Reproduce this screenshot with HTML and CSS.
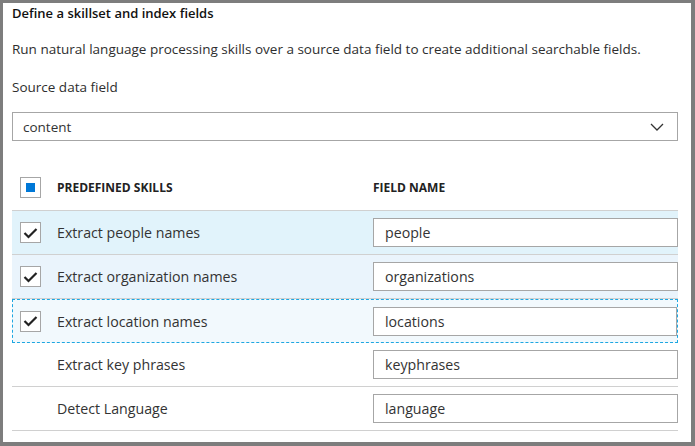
FILE: index.html
```html
<!DOCTYPE html>
<html>
<head>
<meta charset="utf-8">
<link rel="stylesheet" href="styles.css">
</head>
<body>
<div class="frame">
  <div class="content">
    <div class="title">Define a skillset and index fields</div>
    <p class="desc">Run natural language processing skills over a source data field to create additional searchable fields.</p>
    <div class="label">Source data field</div>
    <div class="select">
      <span>content</span>
      <svg class="chev" width="14" height="8" viewBox="0 0 14 8"><path d="M1 1 L7 7 L13 1" fill="none" stroke="#333" stroke-width="1.3"/></svg>
    </div>
    <div class="table">
      <div class="row head">
        <div class="cell-check"><span class="box"><span class="partial"></span></span></div>
        <div class="cell-name">PREDEFINED SKILLS</div>
        <div class="cell-field">FIELD NAME</div>
      </div>
      <div class="row sel-hover">
        <div class="cell-check"><span class="box"><svg width="15" height="12" viewBox="0 0 15 12"><path d="M1.5 6 L5.5 10 L13.5 2" fill="none" stroke="#222" stroke-width="2.2"/></svg></span></div>
        <div class="cell-name">Extract people names</div>
        <div class="cell-field"><div class="input">people</div></div>
      </div>
      <div class="row sel">
        <div class="cell-check"><span class="box"><svg width="15" height="12" viewBox="0 0 15 12"><path d="M1.5 6 L5.5 10 L13.5 2" fill="none" stroke="#222" stroke-width="2.2"/></svg></span></div>
        <div class="cell-name">Extract organization names</div>
        <div class="cell-field"><div class="input">organizations</div></div>
      </div>
      <div class="row focus">
        <div class="cell-check"><span class="box"><svg width="15" height="12" viewBox="0 0 15 12"><path d="M1.5 6 L5.5 10 L13.5 2" fill="none" stroke="#222" stroke-width="2.2"/></svg></span></div>
        <div class="cell-name">Extract location names</div>
        <div class="cell-field"><div class="input">locations</div></div>
      </div>
      <div class="row">
        <div class="cell-check"></div>
        <div class="cell-name">Extract key phrases</div>
        <div class="cell-field"><div class="input">keyphrases</div></div>
      </div>
      <div class="row">
        <div class="cell-check"></div>
        <div class="cell-name">Detect Language</div>
        <div class="cell-field"><div class="input">language</div></div>
      </div>
    </div>
  </div>
</div>
</body>
</html>
```
FILE: styles.css
```css
* { box-sizing: border-box; }
html, body { margin: 0; padding: 0; background: #fff; }
body { font-family: "Open Sans", "Noto Sans", sans-serif; font-size: 13.5px; color: #333; }
.frame {
  width: 695px; height: 446px;
  border-style: solid; border-color: #7d7d7d;
  border-width: 3px 4px 4px 3px;
  overflow: hidden;
  background: #fff;
}
.content { padding: 0 13px 0 9px; }
.title { font-weight: 600; font-size: 13px; line-height: 20px; color: #111; }
.desc { margin: 16px 0 0; line-height: 20px; color: #2e2e2e; }
.label { margin-top: 18px; line-height: 20px; color: #2e2e2e; }
.select {
  margin-top: 15px; height: 29px;
  border: 1px solid #a6a6a6;
  display: flex; align-items: center; justify-content: space-between;
  padding: 0 13px 0 10px;
}
.chev { display: block; }
.table { margin-top: 24px; width: 666px; font-size: 14.2px; }
.row {
  display: flex; align-items: center;
  height: 44px;
  border-bottom: 1px solid #d0d0d0;
}
.row.head { height: 46px; font-weight: 700; font-size: 12px; color: #222; padding-bottom: 1px; }
.row.sel-hover { background: #e1f3fb; }
.row.sel { background: #eaf4fc; }
.row.focus { background: #f2f9fd; border: 1px dashed #1ea7e1; }
.cell-check { width: 45px; padding-left: 8px; display: flex; align-items: center; }
.row.focus .cell-check { width: 44px; padding-left: 7px; }
.cell-name { width: 316px; }
.cell-field { flex: 1; display: flex; }
.box {
  width: 21px; height: 21px;
  border: 1px solid #a6a6a6; background: #fff;
  display: flex; align-items: center; justify-content: center;
}
.partial { width: 9px; height: 9px; background: #0078d7; }
.input {
  width: 305px; height: 29px;
  border: 1px solid #a6a6a6; background: #fff;
  display: flex; align-items: center;
  padding-left: 11px;
}
.row.focus .input { width: 304px; }
```
